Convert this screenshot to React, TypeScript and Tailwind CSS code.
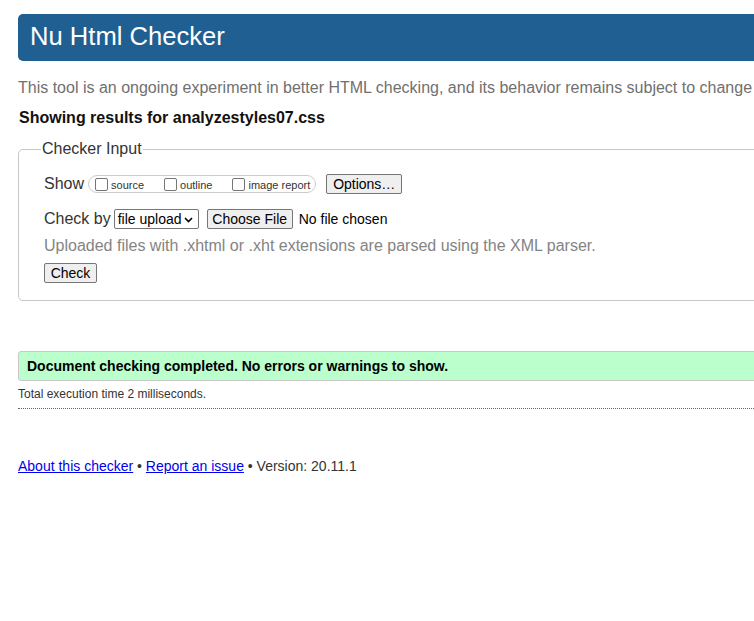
import React from "react";

// ── Small pieces ──────────────────────────────────────────────────────────────

function Btn({ children, className = "" }: { children: React.ReactNode; className?: string }) {
  return (
    <span
      className={`inline-flex items-center justify-center h-[20px] px-[6px] bg-[#efefef] border border-[#767676] rounded-[2px] text-[14px] text-black leading-none whitespace-nowrap ${className}`}
    >
      {children}
    </span>
  );
}

function Check({ label, gap }: { label: string; gap?: boolean }) {
  return (
    <span className={`inline-flex items-center ${gap ? "ml-[20px]" : ""}`}>
      <span className="w-[13px] h-[13px] border border-[#767676] rounded-[2px] bg-white mr-[3px]" />
      <span className="text-[11px] text-[#333] mt-[3px]">{label}</span>
    </span>
  );
}

// ── Page ──────────────────────────────────────────────────────────────────────

export default function App() {
  return (
    <div className="w-full min-h-[621px] overflow-hidden bg-white" style={{ fontFamily: '"Liberation Sans", Arial, sans-serif' }}>
      <div className="w-[1100px] pl-[18px] pt-[14px]">
        {/* Title bar */}
        <div className="h-[47px] bg-[#1f5f92] rounded-[5px] pl-[12px] pt-[7px]">
          <h1 className="text-[25.6px] leading-[30px] text-white font-normal">Nu Html Checker</h1>
        </div>

        <p className="mt-[18px] text-[16px] leading-[18px] text-[#707070] whitespace-nowrap">
          This tool is an ongoing experiment in better HTML checking, and its behavior remains subject to change
        </p>

        <h2 className="mt-[12px] ml-[1px] text-[16px] leading-[18px] font-bold text-[#111]">
          Showing results for analyzestyles07.css
        </h2>

        {/* Checker input */}
        <fieldset className="mt-[13px] border border-[#c8c8c8] rounded-[5px] pl-[25px] pb-[17px]">
          <legend className="-ml-[3px] px-[1px] text-[16px] leading-[18px] text-[#333]">Checker Input</legend>

          <div className="mt-[16px] flex items-center h-[20px]">
            <span className="text-[16px] text-[#333]">Show</span>
            <span className="ml-[4px] h-[18px] inline-flex items-center border border-[#ccc] rounded-full pl-[6px] pr-[5px]">
              <Check label="source" />
              <Check label="outline" gap />
              <Check label="image report" gap />
            </span>
            <Btn className="ml-[10px] w-[76px]">Options…</Btn>
          </div>

          <div className="mt-[15px] flex items-center h-[20px]">
            <span className="text-[16px] text-[#333]">Check by</span>
            <span className="ml-[3px] h-[20px] w-[85px] inline-flex items-center justify-between border border-[#767676] rounded-[2px] bg-white pl-[3px] pr-[5px] text-[14px] text-black">
              file upload
              <svg width="9" height="6" viewBox="0 0 9 6" className="mt-[1px]">
                <path d="M1 1l3.5 3.5L8 1" fill="none" stroke="#000" strokeWidth="1.6" />
              </svg>
            </span>
            <Btn className="ml-[8px] w-[86px]">Choose File</Btn>
            <span className="ml-[6px] text-[14px] text-black">No file chosen</span>
          </div>

          <p className="mt-[8px] text-[16px] leading-[18px] text-[#848484]">
            Uploaded files with .xhtml or .xht extensions are parsed using the XML parser.
          </p>

          <div className="mt-[8px] flex">
            <Btn className="w-[53px]">Check</Btn>
          </div>
        </fieldset>

        {/* Result */}
        <div className="mt-[50px] h-[30px] bg-[#bbffcc] border border-[#c8c8c8] rounded-[3px] pl-[8px] flex items-center">
          <span className="text-[14px] font-bold text-black">Document checking completed. No errors or warnings to show.</span>
        </div>

        <p className="mt-[6px] text-[12px] leading-[14px] text-[#333]">Total execution time 2 milliseconds.</p>
        <div className="mt-[7px] border-t border-dotted border-[#666]" />

        <p className="mt-[49px] text-[14px] leading-[16px] text-[#333]">
          <a className="text-[#0000ee] underline" href="#">About this checker</a>
          {" • "}
          <a className="text-[#0000ee] underline" href="#">Report an issue</a>
          {" • Version: 20.11.1"}
        </p>
      </div>
    </div>
  );
}
